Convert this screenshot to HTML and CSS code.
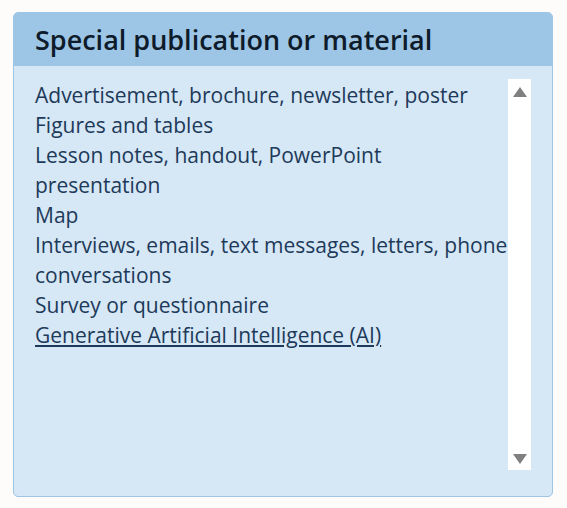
FILE: index.html
```html
<!DOCTYPE html>
<html>
<head>
<meta charset="utf-8">
<link rel="stylesheet" href="styles.css">
</head>
<body>
<div class="panel">
  <div class="panel-head">Special publication or material</div>
  <div class="panel-body">
    <ul class="items">
      <li>Advertisement, brochure, newsletter, poster</li>
      <li>Figures and tables</li>
      <li>Lesson notes, handout, PowerPoint presentation</li>
      <li>Map</li>
      <li>Interviews, emails, text messages, letters, phone conversations</li>
      <li>Survey or questionnaire</li>
      <li><a href="#" class="link">Generative Artificial Intelligence (AI)</a></li>
    </ul>
    <div class="scrollbar">
      <span class="arrow up"></span>
      <span class="arrow down"></span>
    </div>
  </div>
</div>
</body>
</html>
```
FILE: styles.css
```css
html, body {
  margin: 0;
  padding: 0;
  background: #fdfcfb;
}
body {
  padding: 12px 14px 11px 13px;
  font-family: "Open Sans", sans-serif;
}
.panel {
  border: 1px solid #9dc5e6;
  border-radius: 5px;
  background: #d6e7f5;
  overflow: hidden;
  height: 485px;
  display: flex;
  flex-direction: column;
  box-sizing: border-box;
}
.panel-head {
  background: #9dc5e6;
  height: 53px;
  padding: 0 21px;
  box-sizing: border-box;
  display: flex;
  align-items: center;
  font-size: 27px;
  font-weight: 600;
  color: #0d1b2a;
  flex: none;
}
.panel-body {
  flex: 1;
  display: flex;
  padding: 13px 21px 26px 21px;
  min-height: 0;
}
.items {
  list-style: none;
  margin: 0;
  padding: 1px 0 0;
  flex: 1;
  font-size: 21px;
  line-height: 30px;
  color: #1d3a5a;
}
.link {
  color: #1d3a5a;
  text-decoration: underline;
}
.scrollbar {
  width: 23px;
  background: #ffffff;
  display: flex;
  flex-direction: column;
  justify-content: space-between;
  align-items: center;
  padding: 8px 0 6px;
  box-sizing: border-box;
  flex: none;
}
.arrow {
  width: 0;
  height: 0;
  border-left: 7.5px solid transparent;
  border-right: 7.5px solid transparent;
}
.arrow.up {
  border-bottom: 10px solid #808080;
}
.arrow.down {
  border-top: 10px solid #808080;
}
```
